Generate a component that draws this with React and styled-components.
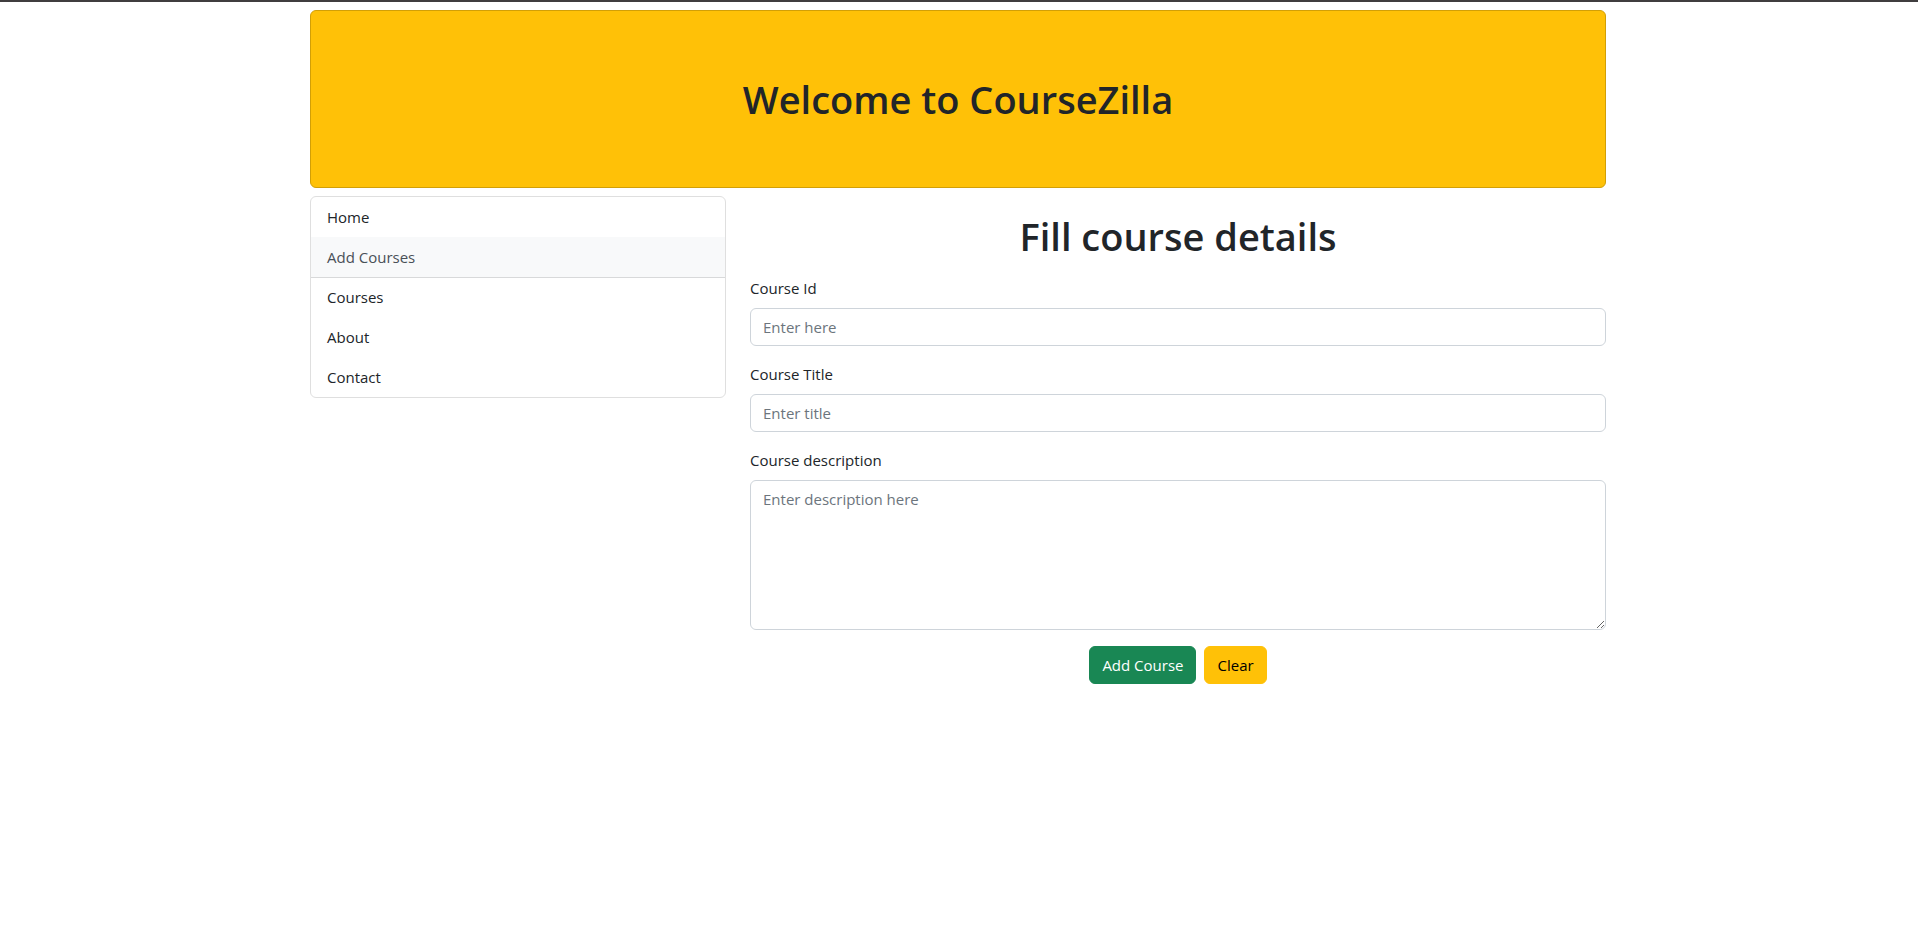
import React from "react";
import styled, { createGlobalStyle, css } from "styled-components";

const GlobalStyle = createGlobalStyle`
  *, *::before, *::after { box-sizing: border-box; }
  body {
    margin: 0;
    background: #fff;
    color: #212529;
    font-family: "Segoe UI", "Open Sans", "Noto Sans", sans-serif;
    font-size: 15px;
    line-height: 24px;
  }
`;

const Page = styled.div`
  padding-right: 2px;
  border-top: 2px solid #403e3f;
`;

const Container = styled.div`
  width: 100%;
  max-width: 1320px;
  margin: 0 auto;
  padding: 8px 12px;
`;

const Banner = styled.header`
  padding: 64px 16px;
  border: 1px solid #d29f06;
  border-radius: 6px;
  background: #ffc107;
`;

const Title = styled.h1`
  margin: 0;
  font-size: 38px;
  font-weight: 600;
  line-height: 48px;
  text-align: center;
`;

const Columns = styled.div`
  display: grid;
  grid-template-columns: repeat(12, minmax(0, 1fr));
  column-gap: 24px;
  align-items: start;
  margin-top: 8px;
`;

const Menu = styled.nav`
  grid-column: span 4;
  display: flex;
  flex-direction: column;
  overflow: hidden;
  border: 1px solid #dfdfdf;
  border-radius: 6px;
`;

const MenuLink = styled.a`
  padding: 8px 16px;
  color: #212529;
  text-decoration: none;
  ${({ $active }) =>
    $active &&
    css`
      color: #495057;
      background: #f8f9fa;
      box-shadow: 0 1px 0 #d8d9da;
    `}
`;

const CourseForm = styled.form`
  grid-column: span 8;
  display: flex;
  flex-direction: column;
  gap: 16px;
  padding-top: 16px;
`;

const Field = styled.div`
  display: flex;
  flex-direction: column;
  gap: 8px;
`;

const control = css`
  display: block;
  width: 100%;
  margin: 0;
  padding: 6px 12px;
  border: 1px solid #ced4da;
  border-radius: 6px;
  background: #fff;
  color: #212529;
  font: inherit;
  &::placeholder { color: #6c757d; opacity: 1; }
`;

const TextInput = styled.input`
  ${control}
  height: 38px;
`;

const TextArea = styled.textarea`
  ${control}
  height: 150px;
  resize: vertical;
`;

const Actions = styled.div`
  display: flex;
  justify-content: center;
  gap: 8px;
`;

const Button = styled.button`
  padding: 6px 12px;
  border: 1px solid ${({ $fill }) => $fill};
  border-radius: 6px;
  background: ${({ $fill }) => $fill};
  color: ${({ $ink }) => $ink};
  font: inherit;
  cursor: pointer;
`;

const links = ["Home", "Add Courses", "Courses", "About", "Contact"];

export default function App() {
  return (
    <Page>
      <GlobalStyle />
      <Container>
        <Banner>
          <Title>Welcome to CourseZilla</Title>
        </Banner>
        <Columns>
          <Menu>
            {links.map((name) => (
              <MenuLink key={name} href="#" $active={name === "Add Courses"}>
                {name}
              </MenuLink>
            ))}
          </Menu>
          <CourseForm onSubmit={(e) => e.preventDefault()}>
            <Title as="h2">Fill course details</Title>
            <Field>
              <label htmlFor="courseId">Course Id</label>
              <TextInput id="courseId" type="text" placeholder="Enter here" />
            </Field>
            <Field>
              <label htmlFor="courseTitle">Course Title</label>
              <TextInput id="courseTitle" type="text" placeholder="Enter title" />
            </Field>
            <Field>
              <label htmlFor="courseDescription">Course description</label>
              <TextArea id="courseDescription" placeholder="Enter description here" />
            </Field>
            <Actions>
              <Button type="submit" $fill="#198754" $ink="#fff">Add Course</Button>
              <Button type="reset" $fill="#ffc107" $ink="#000">Clear</Button>
            </Actions>
          </CourseForm>
        </Columns>
      </Container>
    </Page>
  );
}
